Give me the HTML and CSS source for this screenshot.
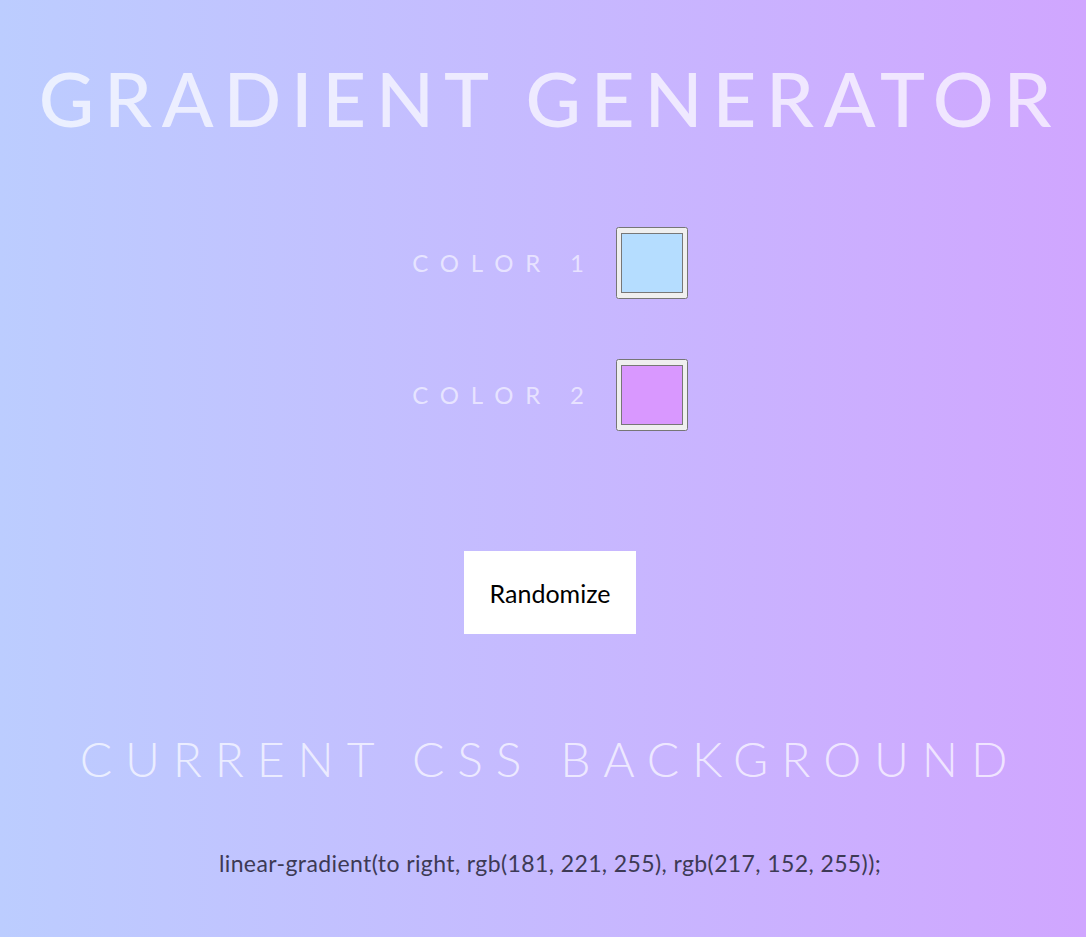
FILE: index.html
```html
<!DOCTYPE html>
<html lang="en">
<head>
<meta charset="utf-8">
<title>Gradient Generator</title>
<link rel="stylesheet" href="styles.css">
</head>
<body>
  <main class="app">
    <h1 class="title">GRADIENT GENERATOR</h1>
    <section class="pickers">
      <div class="picker-row">
        <label class="picker-label" for="c1">COLOR 1</label>
        <input class="picker-input" id="c1" type="color" value="#b5ddff">
      </div>
      <div class="picker-row">
        <label class="picker-label" for="c2">COLOR 2</label>
        <input class="picker-input" id="c2" type="color" value="#d998ff">
      </div>
    </section>
    <button class="randomize" type="button">Randomize</button>
    <h2 class="subtitle">CURRENT CSS BACKGROUND</h2>
    <p class="css-output">linear-gradient(to right, rgb(181, 221, 255), rgb(217, 152, 255));</p>
  </main>
</body>
</html>
```
FILE: styles.css
```css
html, body {
  margin: 0;
  padding: 0;
  height: 100%;
}

body {
  background: linear-gradient(to right, #bccdff, #d0a6ff);
  font-family: Lato, "Open Sans", sans-serif;
  overflow: hidden;
}

.app {
  display: flex;
  flex-direction: column;
  align-items: center;
  text-align: center;
  padding-left: 14px;
}

.title {
  margin: 60px 0 0;
  font-size: 76px;
  line-height: 1;
  font-weight: 500;
  letter-spacing: 9.8px;
  color: rgba(255, 255, 255, 0.7);
  white-space: nowrap;
}

.pickers {
  margin-top: 91px;
  display: flex;
  flex-direction: column;
  gap: 60px;
}

.picker-row {
  display: flex;
  align-items: center;
  justify-content: center;
  height: 72px;
}

.picker-label {
  font-size: 24px;
  line-height: 1;
  letter-spacing: 11.8px;
  color: rgba(255, 255, 255, 0.6);
  margin-right: 20px;
}

.picker-input {
  width: 72px;
  height: 72px;
  margin: 0;
}

.randomize {
  margin-top: 120px;
  width: 172px;
  height: 83px;
  border: none;
  background: #fff;
  color: #000;
  font-family: Lato, "Open Sans", sans-serif;
  font-size: 25px;
  padding: 0;
}

.subtitle {
  margin: 101px 0 0;
  font-size: 48px;
  line-height: 1;
  font-weight: 300;
  letter-spacing: 12.9px;
  color: rgba(255, 255, 255, 0.7);
  white-space: nowrap;
}

.css-output {
  margin: 67px 0 0;
  font-size: 23px;
  line-height: 1.2;
  letter-spacing: 0.4px;
  color: #3d3a55;
}
```
